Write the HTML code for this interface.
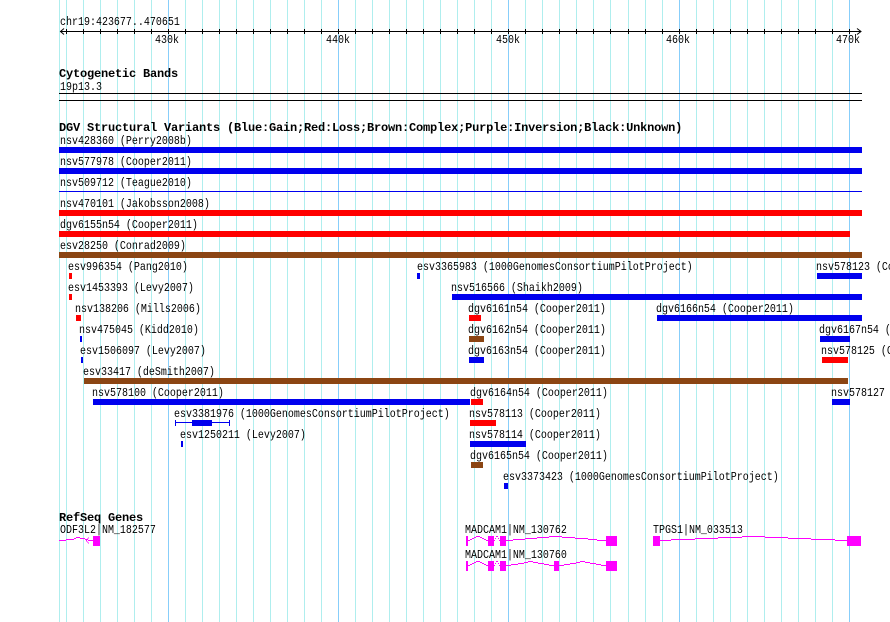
<!DOCTYPE html>
<html><head><meta charset="utf-8"><title>Genome browser</title>
<style>
html,body{margin:0;padding:0;background:#fff;width:890px;height:622px;overflow:hidden}
svg{display:block}
text{font-family:"Liberation Mono",monospace;font-size:12px;fill:#000;white-space:pre}
text.b{font-size:12px;font-weight:bold;letter-spacing:-.2px}
</style></head><body>
<svg width="890" height="622" viewBox="0 0 890 622" xmlns="http://www.w3.org/2000/svg">
<g shape-rendering="crispEdges">
<path fill="none" stroke="#afeeee" d="M59.5 0V622M66.5 0V622M83.5 0V622M100.5 0V622M117.5 0V622M134.5 0V622M151.5 0V622M185.5 0V622M202.5 0V622M219.5 0V622M236.5 0V622M253.5 0V622M270.5 0V622M287.5 0V622M304.5 0V622M321.5 0V622M355.5 0V622M372.5 0V622M389.5 0V622M406.5 0V622M423.5 0V622M440.5 0V622M457.5 0V622M474.5 0V622M491.5 0V622M525.5 0V622M542.5 0V622M559.5 0V622M576.5 0V622M593.5 0V622M610.5 0V622M628.5 0V622M645.5 0V622M662.5 0V622M696.5 0V622M713.5 0V622M730.5 0V622M747.5 0V622M764.5 0V622M781.5 0V622M798.5 0V622M815.5 0V622M832.5 0V622"/>
<path fill="none" stroke="#87cefa" d="M168.5 0V622M338.5 0V622M508.5 0V622M679.5 0V622M849.5 0V622"/>
<path fill="none" stroke="#000" d="M60 31.5H861M66.5 29V34M83.5 29V34M100.5 29V34M117.5 29V34M134.5 29V34M151.5 29V34M168.5 29V34M185.5 29V34M202.5 29V34M219.5 29V34M236.5 29V34M253.5 29V34M270.5 29V34M287.5 29V34M304.5 29V34M321.5 29V34M338.5 29V34M355.5 29V34M372.5 29V34M389.5 29V34M406.5 29V34M423.5 29V34M440.5 29V34M457.5 29V34M474.5 29V34M491.5 29V34M508.5 29V34M525.5 29V34M542.5 29V34M559.5 29V34M576.5 29V34M593.5 29V34M610.5 29V34M628.5 29V34M645.5 29V34M662.5 29V34M679.5 29V34M696.5 29V34M713.5 29V34M730.5 29V34M747.5 29V34M764.5 29V34M781.5 29V34M798.5 29V34M815.5 29V34M832.5 29V34M849.5 29V34M59 93.5H862M59 100.5H862"/>
</g>
<path fill="none" stroke="#000" d="M64 28.5L60.5 31.5L64 34.5M857 28.5L861 31.5L857 34.5"/>

<g shape-rendering="crispEdges">
<g fill="#0000ee">
<rect x="59" y="147" width="803" height="6"/>
<rect x="59" y="168" width="803" height="6"/>
<rect x="59" y="191" width="803" height="1"/>
<rect x="417" y="273" width="3" height="6"/>
<rect x="817" y="273" width="45" height="6"/>
<rect x="452" y="294" width="410" height="6"/>
<rect x="657" y="315" width="205" height="6"/>
<rect x="80" y="336" width="2" height="6"/>
<rect x="820" y="336" width="30" height="6"/>
<rect x="81" y="357" width="2" height="6"/>
<rect x="469" y="357" width="15" height="6"/>
<rect x="93" y="399" width="377" height="6"/>
<rect x="832" y="399" width="18" height="6"/>
<rect x="175" y="420" width="1" height="6"/>
<rect x="229" y="420" width="1" height="6"/>
<rect x="175" y="422" width="55" height="1"/>
<rect x="192" y="420" width="20" height="6"/>
<rect x="181" y="441" width="2" height="6"/>
<rect x="470" y="441" width="56" height="6"/>
<rect x="504" y="483" width="4" height="6"/>
</g>
<g fill="#ff0000">
<rect x="59" y="210" width="803" height="6"/>
<rect x="59" y="231" width="791" height="6"/>
<rect x="69" y="273" width="3" height="6"/>
<rect x="69" y="294" width="3" height="6"/>
<rect x="76" y="315" width="5" height="6"/>
<rect x="469" y="315" width="12" height="6"/>
<rect x="822" y="357" width="26" height="6"/>
<rect x="471" y="399" width="12" height="6"/>
<rect x="470" y="420" width="26" height="6"/>
</g>
<g fill="#8b4513">
<rect x="59" y="252" width="803" height="6"/>
<rect x="469" y="336" width="15" height="6"/>
<rect x="84" y="378" width="764" height="6"/>
<rect x="471" y="462" width="12" height="6"/>
</g>
<g fill="#ff00ff">
<rect x="93" y="536" width="7" height="10"/>
<rect x="466" y="536" width="2" height="10"/>
<rect x="488" y="536" width="6" height="10"/>
<rect x="500" y="536" width="6" height="10"/>
<rect x="606" y="536" width="11" height="10"/>
<rect x="466" y="561" width="2" height="10"/>
<rect x="488" y="561" width="6" height="10"/>
<rect x="500" y="561" width="6" height="10"/>
<rect x="554" y="561" width="5" height="10"/>
<rect x="606" y="561" width="11" height="10"/>
<rect x="653" y="536" width="7" height="10"/>
<rect x="847" y="536" width="14" height="10"/>
</g>
<g fill="none" stroke="#ff00ff" stroke-width="1">
<path d="M59 540.5H66M66 539.5H74M74 538.5H76M76 537.5H80M80 538.5H85M85 539.5H88M88 540.5H93"/>
<path d="M88.5 537.5V538.5M87.5 538.5V539.5M86.5 539.5V541.5M87.5 541.5V542.5M88.5 542.5V543.5"/>
<path d="M468 540.5H470M470 539.5H472M472 538.5H474M474 537.5H476M476 536.5H480M480 537.5H482M482 538.5H484M484 539.5H486M486 540.5H488M494 540.5H495M495 538.5H496M496 536.5H498M498 538.5H499M499 540.5H500M506 540.5H513M513 539.5H525M525 538.5H537M537 537.5H549M549 536.5H562M562 537.5H575M575 538.5H588M588 539.5H597M597 540.5H606"/>
<path d="M468 565.5H470M470 564.5H472M472 563.5H474M474 562.5H476M476 561.5H480M480 562.5H482M482 563.5H484M484 564.5H486M486 565.5H488M494 565.5H495M495 563.5H496M496 561.5H498M498 563.5H499M499 565.5H500M506 565.5H511M511 564.5H518M518 563.5H524M524 562.5H528M528 561.5H533M533 562.5H538M538 563.5H544M544 564.5H549M549 565.5H554M559 565.5H564M564 564.5H570M570 563.5H576M576 562.5H580M580 561.5H585M585 562.5H590M590 563.5H596M596 564.5H601M601 565.5H606"/>
<path d="M660 540.5H671M671 539.5H695M695 538.5H718M718 537.5H742M742 536.5H765M765 537.5H788M788 538.5H811M811 539.5H835M835 540.5H847"/>
</g>
</g>

<g transform="scale(.83333,1)">
<text x="72" y="25">chr19:423677..470651</text>
<text x="186" y="43">430k</text>
<text x="391.2" y="43">440k</text>
<text x="595.2" y="43">450k</text>
<text x="799.2" y="43">460k</text>
<text x="1003.2" y="43">470k</text>
<text x="72" y="90">19p13.3</text>
<text x="72" y="144">nsv428360 (Perry2008b)</text>
<text x="72" y="165">nsv577978 (Cooper2011)</text>
<text x="72" y="186">nsv509712 (Teague2010)</text>
<text x="72" y="207">nsv470101 (Jakobsson2008)</text>
<text x="72" y="228">dgv6155n54 (Cooper2011)</text>
<text x="72" y="249">esv28250 (Conrad2009)</text>
<text x="81.6" y="270">esv996354 (Pang2010)</text>
<text x="500.4" y="270">esv3365983 (1000GenomesConsortiumPilotProject)</text>
<text x="979.2" y="270">nsv578123 (Cooper2011)</text>
<text x="81.6" y="291">esv1453393 (Levy2007)</text>
<text x="541.2" y="291">nsv516566 (Shaikh2009)</text>
<text x="90" y="312">nsv138206 (Mills2006)</text>
<text x="561.6" y="312">dgv6161n54 (Cooper2011)</text>
<text x="787.2" y="312">dgv6166n54 (Cooper2011)</text>
<text x="94.8" y="333">nsv475045 (Kidd2010)</text>
<text x="561.6" y="333">dgv6162n54 (Cooper2011)</text>
<text x="982.8" y="333">dgv6167n54 (Cooper2011)</text>
<text x="96" y="354">esv1506097 (Levy2007)</text>
<text x="561.6" y="354">dgv6163n54 (Cooper2011)</text>
<text x="985.2" y="354">nsv578125 (Cooper2011)</text>
<text x="99.6" y="375">esv33417 (deSmith2007)</text>
<text x="110.4" y="396">nsv578100 (Cooper2011)</text>
<text x="564" y="396">dgv6164n54 (Cooper2011)</text>
<text x="997.2" y="396">nsv578127 (Cooper2011)</text>
<text x="208.8" y="417">esv3381976 (1000GenomesConsortiumPilotProject)</text>
<text x="562.8" y="417">nsv578113 (Cooper2011)</text>
<text x="216" y="438">esv1250211 (Levy2007)</text>
<text x="562.8" y="438">nsv578114 (Cooper2011)</text>
<text x="564" y="459">dgv6165n54 (Cooper2011)</text>
<text x="603.6" y="480">esv3373423 (1000GenomesConsortiumPilotProject)</text>
<text x="72" y="533">ODF3L2|NM_182577</text>
<text x="558" y="533">MADCAM1|NM_130762</text>
<text x="783.6" y="533">TPGS1|NM_033513</text>
<text x="558" y="558">MADCAM1|NM_130760</text>
</g>
<text class="b" x="59" y="77">Cytogenetic Bands</text>
<text class="b" x="59" y="131">DGV Structural Variants (Blue:Gain;Red:Loss;Brown:Complex;Purple:Inversion;Black:Unknown)</text>
<text class="b" x="59" y="521">RefSeq Genes</text>
</svg>
</body></html>
